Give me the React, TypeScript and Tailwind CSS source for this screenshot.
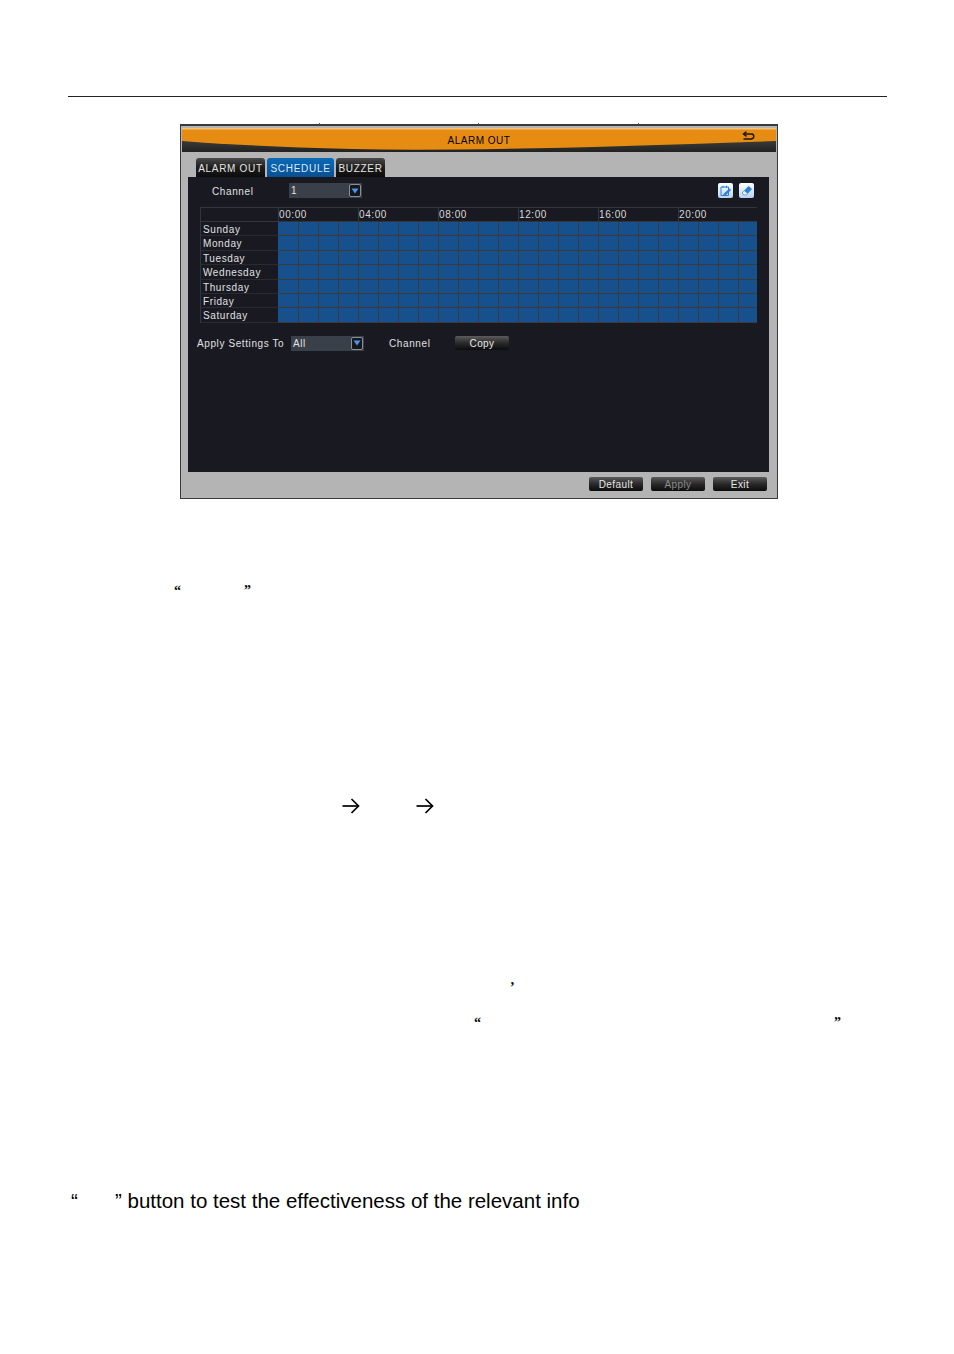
const days = ["Sunday", "Monday", "Tuesday", "Wednesday", "Thursday", "Friday", "Saturday"];
const times = ["00:00", "04:00", "08:00", "12:00", "16:00", "20:00"];
const cells = Array.from({ length: 24 }, (_, i) => i);

function Arrow() {
  return (
    <svg width="18" height="16" viewBox="0 0 18 16" fill="none" stroke="#000" strokeWidth="1.7">
      <path d="M0.5 8H16.5" />
      <path d="M9.5 1L16.5 8L9.5 15" />
    </svg>
  );
}

function DropArrow() {
  return (
    <span className="flex h-[13px] w-[12px] items-center justify-center rounded-[2px] border border-[#8a8f96] bg-[#15171d]">
      <svg width="8" height="6" viewBox="0 0 8 6">
        <path d="M0.5 0.5H7.5L4 5.5Z" fill="#4f94ea" />
      </svg>
    </span>
  );
}

function DarkButton({ label, width, dim }: { label: string; width: string; dim?: boolean }) {
  return (
    <div
      className={`flex h-[14px] items-center justify-center rounded-[2px] bg-gradient-to-b from-[#5c5c5c] via-[#2a2a2a] to-[#0c0c0c] text-[10px] tracking-[0.4px] ${width} ${
        dim ? "text-[#8c8c8c]" : "text-[#e6e6e6]"
      }`}
    >
      {label}
    </div>
  );
}

function Tab({ label, width, active }: { label: string; width: string; active?: boolean }) {
  return (
    <div
      className={`flex h-[19px] items-center justify-center rounded-t-[3px] pt-px text-[10px] tracking-[0.7px] ${width} ${
        active
          ? "bg-gradient-to-b from-[#0a6ab8] to-[#0a4f92] text-[#d8ecfb]"
          : "bg-gradient-to-b from-[#4a4a4a] via-[#1e1e1e] to-[#0c0c0c] text-[#e4e4e4]"
      }`}
    >
      {label}
    </div>
  );
}

export default function App() {
  return (
    <div className="h-[1354px] w-[954px] overflow-hidden bg-white pt-[96px] font-['Liberation_Sans',sans-serif] text-black">
      <div className="ml-[68px] mr-[67px] h-px bg-[#222]" />

      {/* Alarm out window */}
      <div className="relative ml-[180px] mt-[27px] h-[375px] w-[598px] border border-t-2 border-[#3a3a3a] bg-[#b4b4b4] text-[#e0e0e0]">
        <span className="absolute -top-[3px] left-[138px] h-[2px] w-px bg-[#555]" />
        <span className="absolute -top-[3px] left-[297px] h-[2px] w-px bg-[#555]" />
        <span className="absolute -top-[3px] left-[457px] h-[2px] w-px bg-[#555]" />

        {/* Title bar */}
        <div className="relative ml-px mr-px mt-[2px] flex h-[24px] items-center justify-center bg-gradient-to-b from-[#5a5a5a] to-[#222222]">
          <svg className="absolute inset-0" width="594" height="24" viewBox="0 0 594 24" preserveAspectRatio="none">
            <path d="M0 0H594V13Q300 24 170 21Q60 18 0 13Z" fill="#e78c12" />
            <path d="M0 0H594V1.5H0Z" fill="#f5c27a" />
          </svg>
          <span className="relative text-[10px] tracking-[0.5px] text-black">ALARM OUT</span>
          <svg className="absolute right-[21px] top-[3px]" width="13" height="9" viewBox="0 0 13 9" fill="none" stroke="#1b1408" strokeWidth="1.4">
            <path d="M4.5 0.6L1.5 3L4.5 5.4" />
            <path d="M1.5 3H9.5Q11.8 3 11.8 5.3T9.5 8H1.5" />
          </svg>
        </div>

        {/* Tabs */}
        <div className="ml-[15px] mt-[6px] flex gap-[2px]">
          <Tab label="ALARM OUT" width="w-[69px]" />
          <Tab label="SCHEDULE" width="w-[67px]" active />
          <Tab label="BUZZER" width="w-[49px]" />
        </div>

        {/* Dark panel */}
        <div className="ml-[7px] h-[295px] w-[581px] bg-[#181921] text-[10px] tracking-[0.6px]">
          <div className="flex h-[27px] items-center pl-[24px] pr-[15px]">
            <span className="w-[77px] pt-px">Channel</span>
            <div className="flex h-[15px] w-[73px] items-center justify-between bg-[#3a4049] pl-[2px] pr-px">
              <span>1</span>
              <DropArrow />
            </div>
            <div className="ml-auto flex gap-[6px]">
              <div className="flex h-[15px] w-[15px] items-center justify-center rounded-[2px] bg-gradient-to-b from-white to-[#b9d2ef]">
                <svg width="11" height="12" viewBox="0 0 11 12" fill="none" stroke="#2f7fd6" strokeWidth="1">
                  <path d="M1 2H8.5V10.5H1Z" />
                  <path d="M3 0.8V3M6.5 0.8V3" />
                  <path d="M4 9L9.5 4L10.5 5L5.5 10L3.8 10.3Z" fill="#2f7fd6" />
                </svg>
              </div>
              <div className="flex h-[15px] w-[15px] items-center justify-center rounded-[2px] bg-gradient-to-b from-white to-[#b9d2ef]">
                <svg width="12" height="12" viewBox="0 0 12 12">
                  <path d="M7.5 1L11 4L5.5 10H3L1 8Z" fill="#2f7fd6" />
                  <path d="M1 8L3 10H5.5L6.8 8.6L3.2 5.6Z" fill="#e8f1fb" stroke="#2f7fd6" strokeWidth="0.6" />
                </svg>
              </div>
            </div>
          </div>

          {/* Schedule grid */}
          <div className="ml-[12px] mt-[3px] w-[557px] overflow-hidden border-l border-t border-[#33353c]">
            <div className="flex h-[14px] items-center border-b border-[#33353c]">
              <div className="w-[77px] shrink-0" />
              {times.map((t) => (
                <div key={t} className="w-[80px] shrink-0 border-l border-[#33353c] leading-[14px] text-[#d8d8d8]">
                  {t}
                </div>
              ))}
            </div>
            {days.map((d) => (
              <div key={d} className="flex h-[14.4px]">
                <div className="w-[77px] shrink-0 border-b border-[#2a2b31] pl-[2px] leading-[15px] text-[#e0e0e0]">{d}</div>
                <div className="flex flex-1 overflow-hidden border-b border-[#3e3a38] bg-[#16518d]">
                  {cells.map((c) => (
                    <div key={c} className="w-[20px] shrink-0 border-l border-[#3e3a38] first:border-l-0" />
                  ))}
                </div>
              </div>
            ))}
          </div>

          {/* Apply row */}
          <div className="mt-[13px] flex h-[15px] items-center pl-[9px]">
            <span className="w-[94px] whitespace-nowrap">Apply Settings To</span>
            <div className="flex h-[15px] w-[73px] items-center justify-between bg-[#3a4049] pl-[2px] pr-px">
              <span>All</span>
              <DropArrow />
            </div>
            <span className="ml-[25px] w-[66px]">Channel</span>
            <DarkButton label="Copy" width="w-[54px]" />
          </div>
        </div>

        {/* Footer buttons */}
        <div className="mt-[5px] flex justify-end gap-[8px] pr-[10px]">
          <DarkButton label="Default" width="w-[54px]" />
          <DarkButton label="Apply" width="w-[54px]" dim />
          <DarkButton label="Exit" width="w-[54px]" />
        </div>
      </div>

      {/* Stray glyphs left in the document text */}
      <div className="mt-[83px] flex h-[18px] items-center pl-[174px] font-['Liberation_Serif',serif] text-[14px] font-bold leading-[18px]">
        <span className="w-[70px]">“</span>
        <span>”</span>
      </div>
      <div className="mt-[198px] flex h-[16px] items-center pl-[342px]">
        <span className="w-[74px]">
          <Arrow />
        </span>
        <Arrow />
      </div>
      <div className="mt-[165px] h-[18px] pl-[510px] font-['Liberation_Serif',serif] text-[14px] font-bold leading-[18px]">’</div>
      <div className="mt-[17px] flex h-[18px] items-center pl-[474px] font-['Liberation_Serif',serif] text-[14px] font-bold leading-[18px]">
        <span className="w-[360px]">“</span>
        <span>”</span>
      </div>
      <div className="mt-[157px] flex h-[24px] items-center whitespace-pre pl-[71px] text-[20.5px] leading-[24px]">
        <span className="w-[44px]">“</span>
        <span>” button to test the effectiveness of the relevant info</span>
      </div>
    </div>
  );
}
